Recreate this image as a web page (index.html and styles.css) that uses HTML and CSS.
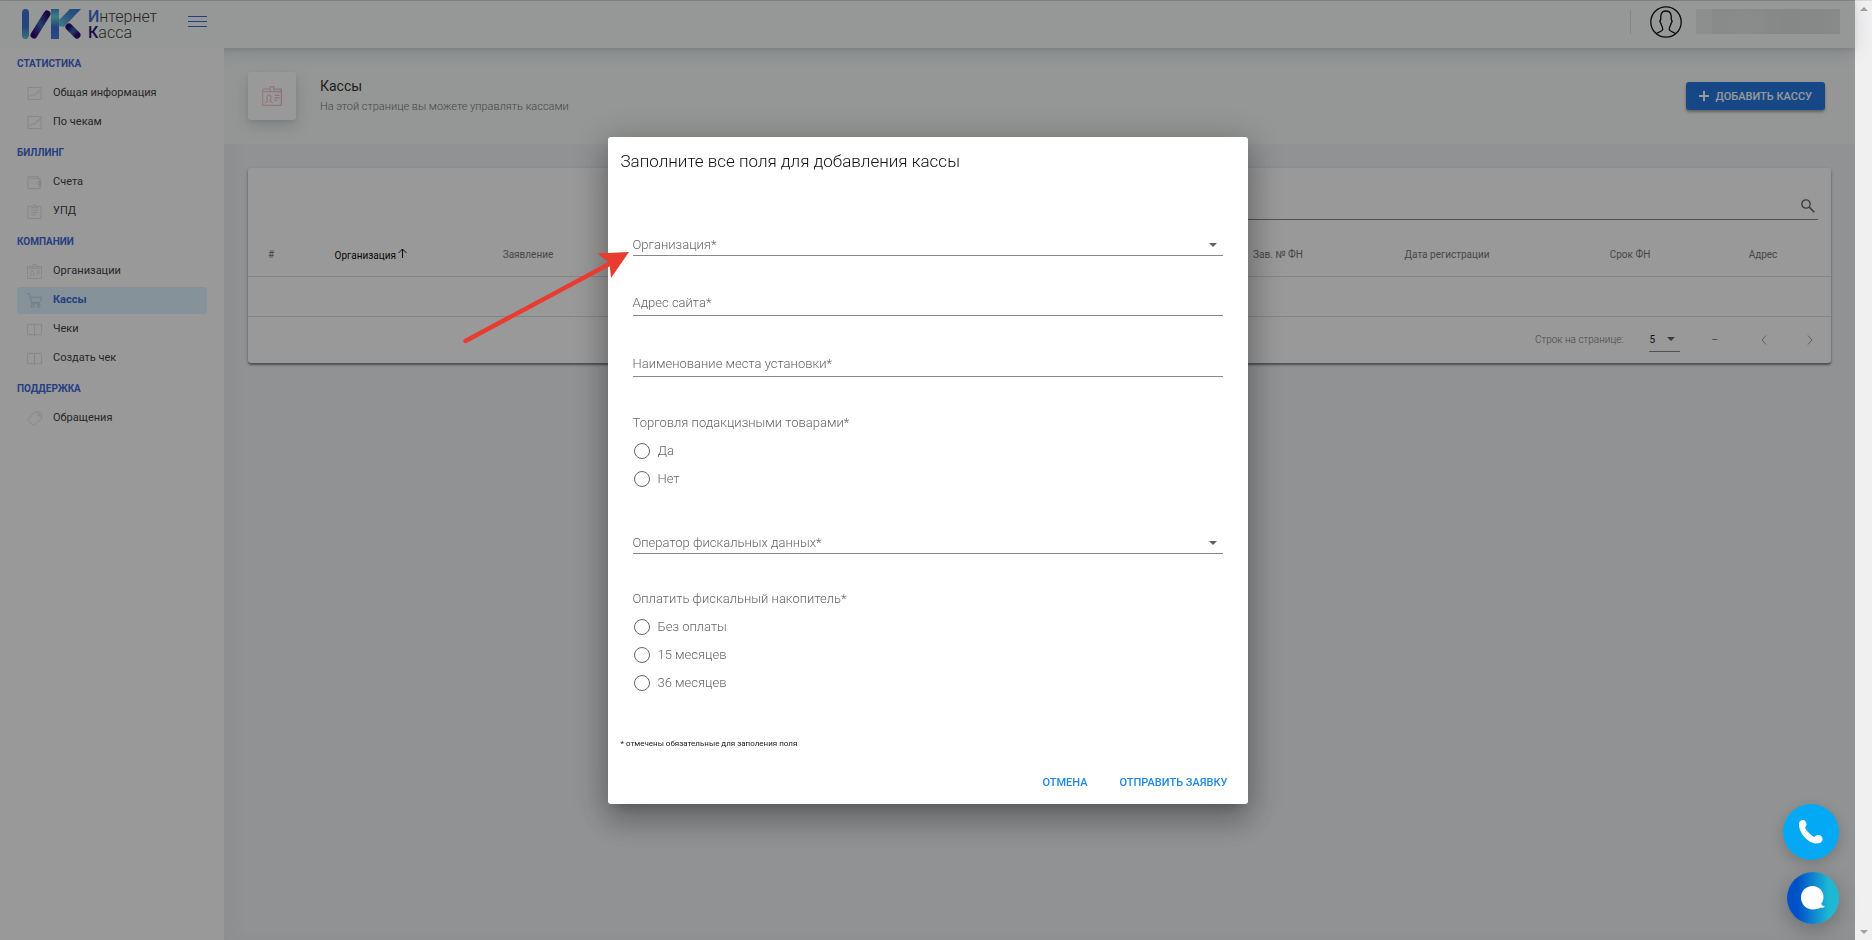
FILE: index.html
```html
<!DOCTYPE html>
<html lang="ru">
<head>
<meta charset="utf-8">
<title>Интернет Касса — Кассы</title>
<link rel="stylesheet" href="styles.css">
</head>
<body>
<svg class="defs" width="0" height="0" aria-hidden="true">
  <defs>
    <linearGradient id="pink" x1="0" x2="1"><stop offset="0" stop-color="#f4c4b8"/><stop offset="1" stop-color="#dca0cc"/></linearGradient>
    <linearGradient id="lg1" x1="0" y1="0" x2="0" y2="1"><stop offset="0" stop-color="#3f6fd8"/><stop offset=".6" stop-color="#3f6fd8"/><stop offset="1" stop-color="#62c4d4"/></linearGradient>
    <linearGradient id="lg2" x1="1" y1="0" x2="0" y2="1"><stop offset="0" stop-color="#300a70"/><stop offset=".5" stop-color="#3868b8"/><stop offset="1" stop-color="#300a70"/></linearGradient>
    <linearGradient id="lg3" x1="0" y1="0" x2="0" y2="1"><stop offset="0" stop-color="#3f8fd8"/><stop offset=".25" stop-color="#68d4dc"/><stop offset=".6" stop-color="#3f6fd8"/><stop offset="1" stop-color="#4878e0"/></linearGradient>
    <linearGradient id="lg4" x1="1" y1="0" x2="0" y2="1"><stop offset="0" stop-color="#3f6fd8"/><stop offset=".4" stop-color="#4888d8"/><stop offset="1" stop-color="#68d4dc"/></linearGradient>
    <linearGradient id="lg5" x1="0" y1="0" x2="1" y2="1"><stop offset="0" stop-color="#300a70"/><stop offset=".5" stop-color="#3868b8"/><stop offset="1" stop-color="#300a70"/></linearGradient>
    <symbol id="chart" viewBox="0 0 16 16"><path d="M1 1.500h14v13H1zM1.500 12.500l2.500-2.500 1 1 2-2.500 1.500 1.500 2.500-4 1 1 2-3.500"/></symbol>
    <symbol id="wallet" viewBox="0 0 16 16"><path d="M1 3.500h12.500v11H1zM1 3.500v-2h11v2M13.500 3.500h1v11h-1M15 7.500h-3.500l-1 1.500 1 1.500H15z"/></symbol>
    <symbol id="clip" viewBox="0 0 16 16"><path d="M4.500 2.500H1v13h14v-13h-3.500M5 4V2.500h2L8 .5l1 2h2V4zM4.500 6.500h7M4.500 9h7M4.500 11.500h5"/></symbol>
    <symbol id="badge" viewBox="0 0 16 16"><path d="M.5 2.500h6M9.500 2.500h6v13H.5v-13M.5 4.500h6M9.500 4.500h6M6.500.5h3v4h-3zM2.500 13.500l2-1.500c-1-2-1-5 1-5s2 3 1 5l2 1.500M10 7.500h4M10 9.500h4M10 11.500h2"/></symbol>
    <symbol id="cart" viewBox="0 0 16 16"><path d="M0 .5h2.500L5 11.500h9M3.500 4.500h12l-2 5.500h-9"/><circle cx="6" cy="14" r="1.500"/><circle cx="12.500" cy="14" r="1.500"/></symbol>
    <symbol id="book" viewBox="0 0 16 16"><path d="M.5 2.500h15v11H.5zM8 2.500v13"/></symbol>
    <symbol id="tag" viewBox="0 0 16 16"><path d="M.5 9.500l8-8.500h5l2 2v5l-8.500 7.500z"/><circle cx="12.500" cy="4" r="1.300"/></symbol>
  </defs>
</svg>

<div class="shell">
  <div class="app">
    <header class="topbar">
      <div class="brand">
        <a href="#" class="logo" aria-label="Интернет Касса">
          <svg width="62" height="32" viewBox="0 0 62 32" fill="none">
            <path d="M1 4q0-4 3.500-4T8 4v23l-2 3H4q-3 0-3-4z" fill="url(#lg1)"/>
            <path d="M13 26L26 5" stroke="url(#lg2)" stroke-width="7" stroke-linecap="round"/>
            <path d="M30 0h8v30h-8z" fill="url(#lg3)"/>
            <path d="M49 0h11L43 18l-5-1v-6z" fill="url(#lg4)"/>
            <path d="M48 18l8 8" stroke="url(#lg5)" stroke-width="7" stroke-linecap="round"/>
          </svg>
          <span class="wordmark"><span><b class="w1">И</b>нтернет</span><span><b class="w2">К</b>асса</span></span>
        </a>
        <button class="burger" aria-label="Меню"><i></i><i></i><i></i></button>
      </div>
      <div class="user">
        <span class="divider"></span>
        <svg class="avatar" width="32" height="32" viewBox="0 0 32 32" fill="none" stroke="#111" stroke-width="1.300"><circle cx="16" cy="16" r="15.200"/><path d="M7 27.300c1-1.300 5.500-1.500 5.700-4 .2-2.300-1.200-3-2-6.300-1-1-.8-2.500 0-3.500 0-3-.5-8.500 5.300-8.500s5.300 5.500 5.300 8.500c.8 1 1 2.500 0 3.500-.8 3.300-2.200 4-2 6.300.2 2.500 4.700 2.700 5.700 4"/></svg>
        <span class="masked"><i></i></span>
      </div>
    </header>

    <div class="body">
      <nav class="sidebar">
        <h2>Статистика</h2>
        <a href="#"><svg><use href="#chart"/></svg><span>Общая информация</span></a>
        <a href="#"><svg><use href="#chart"/></svg><span>По чекам</span></a>
        <h2>Биллинг</h2>
        <a href="#"><svg><use href="#wallet"/></svg><span>Счета</span></a>
        <a href="#"><svg><use href="#clip"/></svg><span>УПД</span></a>
        <h2>Компании</h2>
        <a href="#"><svg><use href="#badge"/></svg><span>Организации</span></a>
        <a href="#" class="active"><svg><use href="#cart"/></svg><span>Кассы</span></a>
        <a href="#"><svg><use href="#book"/></svg><span>Чеки</span></a>
        <a href="#"><svg><use href="#book"/></svg><span>Создать чек</span></a>
        <h2>Поддержка</h2>
        <a href="#"><svg><use href="#tag"/></svg><span>Обращения</span></a>
      </nav>

      <main class="main">
        <section class="pagehead">
          <div class="headicon"><svg width="20" height="20" fill="none" stroke="url(#pink)"><use href="#badge"/></svg></div>
          <div class="headtext"><h1>Кассы</h1><p>На этой странице вы можете управлять кассами</p></div>
          <button class="add"><svg width="10" height="10" viewBox="0 0 10 10"><path d="M5 0v10M0 5h10" stroke="#fff" stroke-width="2"/></svg>Добавить кассу</button>
        </section>

        <section class="card">
          <label class="search"><input type="search" aria-label="Поиск"><svg width="14" height="14" viewBox="0 0 14 14" fill="none" stroke="#616161"><circle cx="5" cy="5" r="4.200" stroke-width="1.300"/><path d="M8.300 8.300l5 5" stroke-width="1.600"/></svg></label>
          <table>
            <colgroup><col class="c1"><col class="c2"><col class="c3"><col><col class="c5"><col class="c6"><col class="c7"><col class="c8"></colgroup>
            <thead><tr>
              <th>#</th>
              <th class="sorted">Организация <svg width="9" height="11" viewBox="0 0 9 11" fill="none" stroke="#111"><path d="M4.500 10V1M.5 5l4-4 4 4"/></svg></th>
              <th>Заявление</th><th></th><th>Зав. № ФН</th><th>Дата регистрации</th><th>Срок ФН</th><th>Адрес</th>
            </tr></thead>
            <tbody><tr><td colspan="8"></td></tr></tbody>
          </table>
          <div class="pager">
            <label for="rows">Строк на странице:</label>
            <span class="rows"><select id="rows"><option>5</option></select><i class="caret"></i></span>
            <span class="range">–</span>
            <button aria-label="Назад"><svg width="6" height="10" viewBox="0 0 6 10"><path d="M5 .5L1 5l4 4.500"/></svg></button>
            <button aria-label="Вперёд"><svg width="6" height="10" viewBox="0 0 6 10"><path d="M1 .5L5 5 1 9.500"/></svg></button>
          </div>
        </section>
      </main>
    </div>
  </div>
  <div class="scrollbar"><i class="up"></i><i class="down"></i></div>
</div>

<div class="overlay">
  <form class="dialog" role="dialog" aria-labelledby="dlg">
    <h2 id="dlg">Заполните все поля для добавления кассы</h2>
    <div class="fields">
      <div class="field pick"><label for="org">Организация*</label><select id="org"><option></option></select><i class="caret"></i></div>
      <div class="field"><label for="site">Адрес сайта*</label><input id="site" type="text"></div>
      <div class="field"><label for="place">Наименование места установки*</label><input id="place" type="text"></div>
      <fieldset>
        <legend>Торговля подакцизными товарами*</legend>
        <label><input type="radio" name="excise"><span>Да</span></label>
        <label><input type="radio" name="excise"><span>Нет</span></label>
      </fieldset>
      <div class="field pick"><label for="ofd">Оператор фискальных данных*</label><select id="ofd"><option></option></select><i class="caret"></i></div>
      <fieldset>
        <legend>Оплатить фискальный накопитель*</legend>
        <label><input type="radio" name="fn"><span>Без оплаты</span></label>
        <label><input type="radio" name="fn"><span>15 месяцев</span></label>
        <label><input type="radio" name="fn"><span>36 месяцев</span></label>
      </fieldset>
    </div>
    <p class="note">* отмечены обязательные для заполения поля</p>
    <div class="actions"><button type="button">Отмена</button><button type="submit">Отправить заявку</button></div>
  </form>
</div>

<svg class="pointer" width="170" height="96" viewBox="0 0 170 96"><path d="M5.500 91L153 12" stroke="#e83c30" stroke-width="4.500" stroke-linecap="round"/><path d="M169 2L137.500 3.500l12 9.500 1.500 15z" fill="#e83c30"/></svg>

<div class="floats">
  <button class="phone" aria-label="Позвонить"><svg width="26" height="26" viewBox="0 0 26 26"><path d="M1 4C2 1 5.500 0 7.500 2.500c1.500 2 1.500 4-.5 6 1.500 3.500 5.500 7.500 9.500 9.500 2-2.500 5-2.500 7-.5 2 2.500 1 5.500-2 6.500C12 27 0 14 1 4z" fill="#fff"/></svg></button>
  <button class="chat" aria-label="Чат"><svg width="24" height="24" viewBox="0 0 24 24"><path d="M11.500 0C18 0 22.500 5 22.500 11c0 2.500-.8 5-2.500 7 1 1 2 2 4 2.500-1 1-2.500 1.500-4.500 1.300C17 23 14.500 23.500 12 23.500 5 23.500 0 18 0 11.500S5 0 11.500 0z" fill="#fff"/></svg></button>
</div>
</body>
</html>
```

FILE: styles.css
```css
* { box-sizing: border-box; }
body {
  margin: 0;
  font-family: Roboto, "Liberation Sans", sans-serif;
  font-size: 11px;
  color: #444;
  background: #f1f4f6;
}
h1, h2, p { margin: 0; font-weight: 400; }
a { color: inherit; text-decoration: none; }
button { border: 0; background: none; padding: 0; font: inherit; color: inherit; }
input, select { font: inherit; color: inherit; border: 0; background: none; appearance: none; margin: 0; padding: 0; outline: 0; }
.defs { position: absolute; }

.shell { display: flex; min-height: 100vh; }
.app { flex: 1; display: flex; flex-direction: column; min-width: 0; border-top: 1px solid #ddd; }
.scrollbar {
  width: 17px;
  background: #f0f0f0;
  border-top: 1px solid #dadada;
  display: flex;
  flex-direction: column;
  justify-content: space-between;
  align-items: center;
  padding: 6px 0;
}
.up, .down { border: 4px solid transparent; }
.up { border-top: 0; border-bottom-color: #a0a0a0; }
.down { border-bottom: 0; border-top-color: #a0a0a0; }

.topbar {
  height: 47px;
  display: flex;
  justify-content: space-between;
  background: #f9fdfb;
  box-shadow: 0 4px 18px rgba(8, 10, 60, .12), 0 2px 4px rgba(8, 10, 60, .08);
  z-index: 1;
}
.brand { width: 224px; padding: 0 17px 0 21px; display: flex; justify-content: space-between; align-items: flex-start; }
.logo { display: flex; gap: 5px; padding-top: 8px; }
.wordmark { display: flex; flex-direction: column; font-size: 16px; line-height: 16px; font-weight: 300; color: #444; }
.wordmark span { height: 16px; }
.w1 { color: #3f6ad8; font-weight: 500; }
.w2 { color: #301080; font-weight: 500; }
.burger { display: flex; flex-direction: column; gap: 4px; margin-top: 15px; }
.burger i { width: 19px; height: 1px; background: #3f6ad8; }
.user { display: flex; align-items: center; padding: 0 15px 6px 0; }
.divider { width: 1px; height: 24px; background: #dde0de; margin-right: 19px; }
.masked { width: 144px; height: 25px; margin-left: 14px; background: #eceeed; display: flex; padding-left: 16px; }
.masked i { flex: 1; background: linear-gradient(90deg, #e4e7e6, #e6e9e8 30%, #dfe2e1 60%, #e4e7e6); }

.body { flex: 1; display: flex; }
.sidebar { width: 224px; background: #fff; padding: 0 17px; z-index: 2; display: flex; flex-direction: column; }
.sidebar h2 { height: 31px; line-height: 31px; font-size: 10px; font-weight: 700; color: #3f6ad8; text-transform: uppercase; }
.sidebar a { display: flex; align-items: center; gap: 11px; height: 27px; margin: 1px 0; padding-left: 10px; border-radius: 3px; }
.sidebar a span { padding-bottom: 2px; line-height: 16px; }
.sidebar svg { width: 15px; height: 15px; fill: none; stroke: #e0e0e0; }
.sidebar .active { background: #e0f3ff; color: #3f6ad8; font-weight: 700; }
.sidebar .active svg { stroke: #b8cce8; }

.main { flex: 1; min-width: 0; box-shadow: inset 12px 0 20px rgba(8, 10, 60, .03); }
.pagehead { height: 96px; display: flex; align-items: center; padding: 0 30px 0 24px; background: rgba(250, 255, 250, .7); }
.headicon { width: 48px; height: 48px; background: #fff; border-radius: 3px; display: grid; place-items: center; box-shadow: 0 6px 18px rgba(8, 10, 60, .14), 0 2px 5px rgba(8, 10, 60, .08); }
.headicon svg { opacity: .7; }
.headtext { flex: 1; padding-left: 24px; }
.headtext h1 { font-size: 14px; line-height: 22px; color: #333; }
.headtext p { line-height: 20px; color: #777; font-weight: 300; }
.add {
  height: 28px;
  padding: 0 13px;
  display: flex;
  align-items: center;
  gap: 7px;
  background: #2678e1;
  color: #fff;
  font-size: 11px;
  font-weight: 500;
  text-transform: uppercase;
  border-radius: 3px;
  box-shadow: 0 2px 3px rgba(0, 0, 0, .35);
}

.card { margin: 24px; background: #fff; border-radius: 3px; box-shadow: 0 2px 2px rgba(0, 0, 0, .4), 0 1px 4px rgba(0, 0, 0, .15); }
.search { display: flex; align-items: center; width: 49%; margin: 0 13px 0 auto; padding: 24px 3px 0 0; height: 52px; border-bottom: 1px solid #888; }
.search input { flex: 1; }
table { width: 100%; table-layout: fixed; border-collapse: collapse; }
.c1 { width: 46px; } .c2 { width: 154px; } .c3 { width: 160px; }
.c5 { width: 102px; } .c6 { width: 236px; } .c7 { width: 130px; } .c8 { width: 136px; }
th { height: 56px; padding: 13px 0 0; font-size: 10px; font-weight: 400; color: #777; border-bottom: 1px solid #ddd; }
.sorted { color: #111; }
td { height: 40px; border-bottom: 1px solid #ddd; }
.pager { height: 46px; display: flex; align-items: center; justify-content: flex-end; padding-right: 18px; font-size: 10px; color: #777; }
.pager label { font-weight: 300; }
.rows { display: flex; align-items: center; width: 31px; height: 25px; margin: 0 31px 0 26px; padding-right: 5px; border-bottom: 1px solid #888; color: #222; }
.rows select { flex: 1; min-width: 0; }
.caret { border: 4px solid transparent; border-top-color: #616161; border-bottom: 0; }
.range { margin-right: 43px; }
.pager button + button { margin-left: 40px; }
.pager svg { display: block; fill: none; stroke: #999; }

.overlay { position: fixed; inset: 0 17px 0 0; background: rgba(0, 0, 0, .4); display: flex; align-items: center; justify-content: center; z-index: 5; }
.dialog { width: 640px; background: #fff; border-radius: 3px; color: #666; font-size: 13px; font-weight: 300; box-shadow: 0 9px 12px -6px rgba(0, 0, 0, .2), 0 19px 30px 2px rgba(0, 0, 0, .14), 0 7px 37px 6px rgba(0, 0, 0, .22); }
.dialog h2 { padding: 0 13px; line-height: 48px; font-size: 17px; font-weight: 300; color: #111; }
.fields { padding: 49px 25px 39px; display: flex; flex-direction: column; }
.field { display: grid; align-items: center; height: 26px; margin-bottom: 34px; border-bottom: 1px solid #888; }
.field + .field { margin-bottom: 35px; }
.field > * { grid-area: 1 / 1; }
.field select, .field input { width: 100%; height: 100%; }
.field label { pointer-events: none; }
.pick { height: 22px; }
.pick .caret { justify-self: end; margin: 2px 6px 0 0; pointer-events: none; }
fieldset { border: 0; margin: 3px 0 39px; padding: 0; min-width: 0; }
fieldset:last-child { margin-bottom: 0; }
legend { padding: 0; line-height: 16px; margin-bottom: 6px; }
fieldset label { display: flex; align-items: center; gap: 8px; height: 28px; padding-left: 1px; }
fieldset label span { padding-bottom: 1px; }
fieldset input { width: 16px; height: 16px; border: 1px solid #666; border-radius: 50%; }
fieldset input:checked { background: radial-gradient(#1e88e5 45%, transparent 50%); }
.note { padding: 0 13px; font-size: 8px; line-height: 16px; font-weight: 400; color: #222; }
.actions { display: flex; justify-content: flex-end; gap: 32px; padding: 20px 20px 10px 0; }
.actions button { height: 22px; font-size: 11px; font-weight: 500; text-transform: uppercase; color: #1e88e5; }

.pointer { position: fixed; left: 460px; top: 250px; z-index: 6; }

.floats { position: fixed; right: 33px; bottom: 16px; display: flex; flex-direction: column; align-items: flex-end; gap: 12px; z-index: 6; }
.floats button { display: grid; place-items: center; border-radius: 50%; }
.phone { width: 56px; height: 56px; background: #03a9f4; box-shadow: 0 4px 14px rgba(0, 0, 0, .18); }
.chat { width: 52px; height: 52px; background: linear-gradient(90deg, #0050c8 20%, #1cb8d4 80%); box-shadow: 0 6px 20px rgba(0, 0, 0, .25); }
```
